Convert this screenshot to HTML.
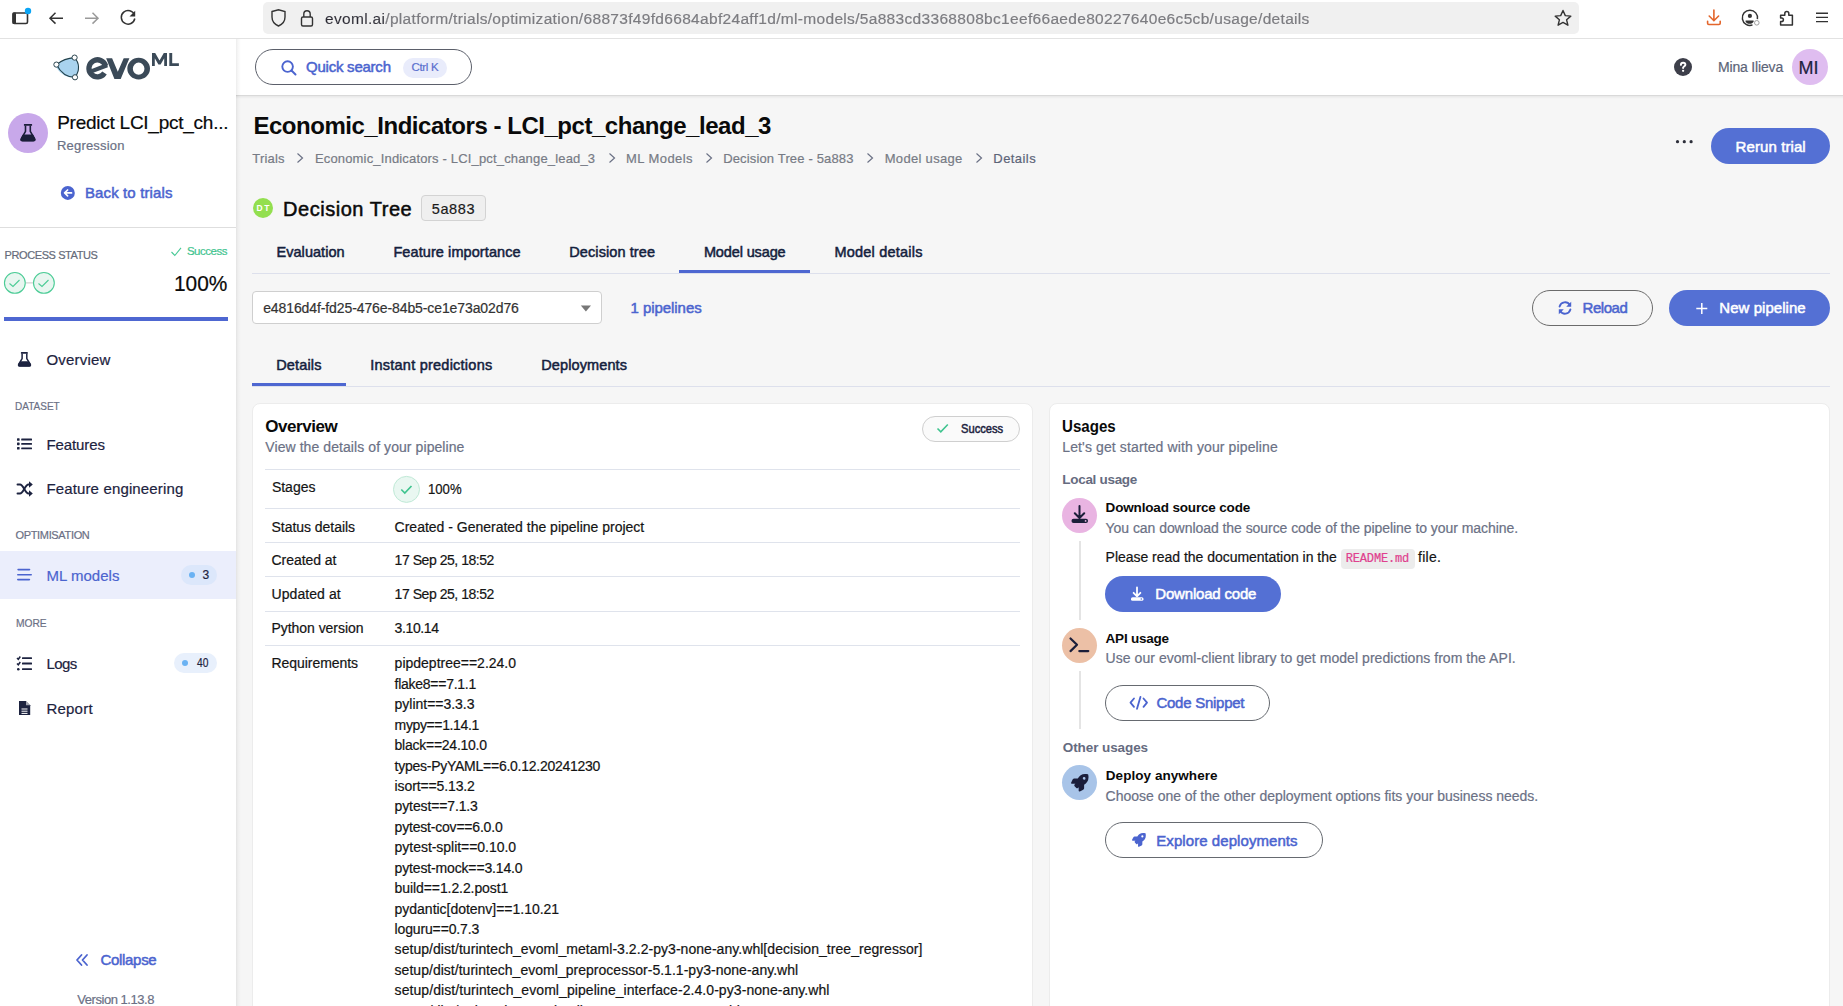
<!DOCTYPE html>
<html><head><meta charset="utf-8">
<style>
*{box-sizing:border-box;margin:0;padding:0}
html,body{width:1843px;height:1006px;overflow:hidden;background:#f6f6f6;font-family:"Liberation Sans",sans-serif}
.t{position:absolute;white-space:pre;line-height:1}
.g{will-change:transform}
svg{overflow:visible}
</style></head><body>
<div style="position:absolute;left:0px;top:0px;width:1843px;height:38px;background:#fff"></div>
<div style="position:absolute;left:0px;top:38px;width:1843px;height:1px;background:#e2e2e2"></div>
<div style="position:absolute;left:263px;top:2px;width:1316px;height:32px;background:#f0f0f0;border-radius:5px"></div>
<svg style="position:absolute;left:0;top:0" width="160" height="38">
    <rect x="13" y="13" width="14.5" height="10.5" rx="1.5" fill="none" stroke="#333" stroke-width="1.6"/>
    <rect x="12.5" y="12.5" width="3.5" height="11.5" rx="1" fill="#333"/>
    <circle cx="28" cy="11" r="3.2" fill="#0aa5f5"/>
    <path d="M63 18.2H50 M55.5 12.8 50 18.2 55.5 23.6" fill="none" stroke="#333" stroke-width="1.5"/>
    <path d="M85 18.2H98 M92.5 12.8 98 18.2 92.5 23.6" fill="none" stroke="#9a9a9a" stroke-width="1.5"/>
    <path d="M134.5 15 A6.8 6.8 0 1 0 134.8 18.5" fill="none" stroke="#333" stroke-width="1.5"/>
    <path d="M135.2 10.8 V16.5 H129.5 Z" fill="#333"/>
</svg>
<svg style="position:absolute;left:263px;top:0" width="60" height="38">
    <path d="M9 11.5 L15.5 9.8 22 11.5 V17 C22 21.5 19 24.5 15.5 26 C12 24.5 9 21.5 9 17 Z" fill="none" stroke="#333" stroke-width="1.4"/>
    <rect x="38.5" y="17" width="11" height="9" rx="1.5" fill="none" stroke="#333" stroke-width="1.4"/>
    <path d="M40.8 17 V14 A3.2 3.2 0 0 1 47.2 14 V17" fill="none" stroke="#333" stroke-width="1.4"/>
</svg>
<svg style="position:absolute;left:1540px;top:0" width="303" height="38">
    <path d="M23 10.5 L25.3 15.6 30.8 16.1 26.6 19.8 27.9 25.2 23 22.4 18.1 25.2 19.4 19.8 15.2 16.1 20.7 15.6 Z" fill="none" stroke="#333" stroke-width="1.4" stroke-linejoin="round"/>
    <path d="M173.9 10 V20.5 M169.2 16 173.9 20.7 178.6 16 M167.6 21.3 V23.3 Q167.6 24.5 168.8 24.5 H179 Q180.2 24.5 180.2 23.3 V21.3" fill="none" stroke="#e3652b" stroke-width="1.6" stroke-linecap="round"/>
    <path d="M212.5 24.9 A7.6 7.6 0 1 1 217.4 19.1" fill="none" stroke="#333" stroke-width="1.5"/>
    <circle cx="209.9" cy="15.9" r="2.1" fill="#333"/>
    <path d="M205.6 20.4 H213.6 V21.5 C213 23.3 211.5 23.8 209.6 23.8 C207.7 23.8 206.2 23.3 205.6 21.5Z" fill="#333"/>
    <circle cx="216.8" cy="22.8" r="2.3" fill="#fff" stroke="#a0a0a0" stroke-width="1"/>
    <path d="M240.6 15.2 H244.8 V13.4 A2 2 0 0 1 248.8 13.4 V15.2 H252.4 V25.1 H240.6 V21.6 H241.6 A1.8 1.8 0 0 0 241.6 18 H240.6 Z" fill="none" stroke="#333" stroke-width="1.5" stroke-linejoin="round"/>
    <path d="M276 13.3 H288 M276 17.4 H288 M276 21.6 H288" stroke="#333" stroke-width="1.4"/>
</svg>
<div style="position:absolute;left:0px;top:39px;width:1843px;height:967px;background:#f6f6f6"></div>
<div style="position:absolute;left:0px;top:39px;width:236px;height:967px;background:#fff"></div>
<div style="position:absolute;left:236px;top:39px;width:1607px;height:56px;background:#fff"></div>
<div style="position:absolute;left:236px;top:95px;width:1607px;height:1px;background:#d9d9d9"></div>
<div style="position:absolute;left:236px;top:96px;width:1607px;height:3px;background:linear-gradient(180deg,rgba(0,0,0,.06),rgba(0,0,0,0))"></div>
<div style="position:absolute;left:236px;top:39px;width:5px;height:967px;background:linear-gradient(90deg,rgba(0,0,0,.075),rgba(0,0,0,.03) 40%,rgba(0,0,0,0))"></div>
<svg style="position:absolute;left:0;top:39px" width="236" height="56" viewBox="0 39 236 56">
  <path d="M55.5 66 C60 61 67 58 74.6 57.6 C79.5 63 80.5 71 75 77.3 C66 78.5 59.5 73 55.5 66Z" fill="#a9d3ee"/>
  <path d="M56.4 64.6 C62 60 67.5 58 74.6 57.6 C79.5 63 80 70.5 75 77.3 C66.5 77.5 60 71.5 56.4 64.6Z" fill="none" stroke="#21404a" stroke-width="1.1"/>
  <circle cx="56.4" cy="64.6" r="2.6" fill="#fff" stroke="#2c4650" stroke-width="1.0"/>
  <circle cx="74.6" cy="57.6" r="2.6" fill="#fff" stroke="#2c4650" stroke-width="1.0"/>
  <circle cx="75" cy="77.3" r="2.6" fill="#fff" stroke="#2c4650" stroke-width="1.0"/>
  <path d="M104.56 72.95 A8.5 8.5 0 1 1 105.6 66" fill="none" stroke="#3b4a58" stroke-width="5.3"/>
  <path d="M107.2 65.2 L90.5 71.6" fill="none" stroke="#3b4a58" stroke-width="4.2"/>
  <path d="M106.15 58.25 H112.1 L117.8 71.7 L123.7 58.25 H129.4 L120.7 79 H114.4 Z" fill="#3b4a58"/>
  <path d="M138.65 57.8 A11.35 10.8 0 1 1 138.65 79.4 A11.35 10.8 0 1 1 138.65 57.8 Z M138.65 62.6 A5.8 6.1 0 1 0 138.65 74.8 A5.8 6.1 0 1 0 138.65 62.6 Z" fill="#3b4a58" fill-rule="evenodd"/>
  <path d="M152 66 V53.1 H155.2 L159.5 60.5 L163.8 53.1 H167 V66 H164.2 V58.2 L160.6 64.5 H158.4 L154.8 58.2 V66 Z M169.3 53.1 H172.2 V63.3 H178.9 V66 H169.3 Z" fill="#3b4a58"/>
</svg>
<div style="position:absolute;left:8px;top:113px;width:40px;height:40px;background:#c8a8ea;border-radius:50%"></div>
<svg style="position:absolute;left:8px;top:113px" width="40" height="40">
  <rect x="15.9" y="11.1" width="8.2" height="1.7" rx=".5" fill="#1b1e3a"/>
  <path d="M17.5 12.5 V18.3 L13.4 25.6 C12.6 27.1 13.3 27.6 14.6 27.6 H25.3 C26.6 27.6 27.3 27.1 26.5 25.6 L22.3 18.3 V12.5" fill="none" stroke="#1b1e3a" stroke-width="1.6" stroke-linejoin="round"/>
  <path d="M15.2 22 H24.7 L26.5 25.6 C27.3 27.1 26.6 27.6 25.3 27.6 H14.6 C13.3 27.6 12.6 27.1 13.4 25.6 Z" fill="#1b1e3a" stroke="#1b1e3a" stroke-width="1.2" stroke-linejoin="round"/>
</svg>
<svg style="position:absolute;left:60px;top:185px" width="16" height="16">
  <circle cx="7.8" cy="7.9" r="7" fill="#4b64cf"/>
  <path d="M11.5 7.9 H4.8 M7.6 5 L4.6 7.9 7.6 10.8" fill="none" stroke="#fff" stroke-width="1.7" stroke-linecap="round" stroke-linejoin="round"/>
</svg>
<div style="position:absolute;left:0px;top:227px;width:236px;height:1px;background:#dedede"></div>
<svg style="position:absolute;left:170px;top:246px" width="14" height="12">
  <path d="M1.5 6 L4.8 9.5 L11 1.8" fill="none" stroke="#48c996" stroke-width="1.1"/>
</svg>
<svg style="position:absolute;left:0;top:268px" width="60" height="30">
  <line x1="25.5" y1="14.9" x2="33" y2="14.9" stroke="#c8c8c8" stroke-width="1"/>
  <circle cx="14.85" cy="14.9" r="10.4" fill="#e8f6f0" stroke="#4ccc96" stroke-width="1.1"/>
  <circle cx="43.9" cy="14.9" r="10.4" fill="#e8f6f0" stroke="#4ccc96" stroke-width="1.1"/>
  <path d="M9.5 15.5 L13 18.5 L19.5 12" fill="none" stroke="#4ccc96" stroke-width="1.1"/>
  <path d="M38.5 15.5 L42 18.5 L48.5 12" fill="none" stroke="#4ccc96" stroke-width="1.1"/>
</svg>
<div style="position:absolute;left:4px;top:317px;width:224px;height:4px;background:#4e67d1"></div>
<svg style="position:absolute;left:16px;top:350px" width="18" height="18">
  <rect x="4.9" y="2.1" width="6.9" height="1.6" rx=".5" fill="#1d2340"/>
  <path d="M6.1 3.4 V8.6 L2.8 14.2 C2.1 15.6 2.7 15.9 3.9 15.9 H13.1 C14.3 15.9 14.9 15.6 14.2 14.2 L10.8 8.6 V3.4" fill="none" stroke="#1d2340" stroke-width="1.5" stroke-linejoin="round"/>
  <path d="M4.6 11.9 H12.3 L14.2 14.2 C14.9 15.6 14.3 15.9 13.1 15.9 H3.9 C2.7 15.9 2.1 15.6 2.8 14.2 Z" fill="#1d2340" stroke="#1d2340" stroke-width="1.1" stroke-linejoin="round"/>
</svg>
<svg style="position:absolute;left:16px;top:436.7px" width="18" height="16">
  <g fill="#1d2340"><rect x="1" y="1.2" width="2.6" height="2.6" rx=".6"/><rect x="1" y="5.6" width="2.6" height="2.6" rx=".6"/><rect x="1" y="10" width="2.6" height="2.6" rx=".6"/>
  <rect x="5.2" y="1.6" width="10.8" height="1.8" rx=".5"/><rect x="5.2" y="6" width="10.8" height="1.8" rx=".5"/><rect x="5.2" y="10.4" width="10.8" height="1.8" rx=".5"/></g>
</svg>
<svg style="position:absolute;left:16px;top:480.5px" width="18" height="16">
  <g fill="none" stroke="#1d2340" stroke-width="1.9" stroke-linecap="round">
  <path d="M1.5 3.5 H4 C7.5 3.5 9 12.5 12.5 12.5 H14"/>
  <path d="M1.5 12.5 H4 C7.5 12.5 9 3.5 12.5 3.5 H14"/></g>
  <path d="M13 0.3 L16.8 3.5 L13 6.7Z M13 9.3 L16.8 12.5 L13 15.7Z" fill="#1d2340"/>
</svg>
<div style="position:absolute;left:0px;top:551px;width:236px;height:48px;background:#ebeefc"></div>
<svg style="position:absolute;left:16px;top:566px" width="18" height="16">
  <g fill="#4b64cf"><rect x="1.3" y="2.7" width="13" height="1.7" rx=".8"/><rect x="1" y="7.9" width="15" height="1.7" rx=".8"/><rect x="1" y="12.7" width="13.2" height="1.7" rx=".8"/></g>
</svg>
<div style="position:absolute;left:181px;top:565px;width:36px;height:20px;background:#dce7fb;border-radius:10px"></div>
<div style="position:absolute;left:189px;top:572px;width:6px;height:6px;background:#6ab2f3;border-radius:50%"></div>
<svg style="position:absolute;left:16px;top:654.5px" width="18" height="18">
  <g fill="none" stroke="#1d2340" stroke-width="1.5"><path d="M1 3 L2.3 4.3 L4.3 1.5"/><path d="M1 8.5 L2.3 9.8 L4.3 7"/></g>
  <circle cx="2.3" cy="14.3" r="1.3" fill="#1d2340"/>
  <g fill="#1d2340"><rect x="6" y="2.2" width="10" height="1.8" rx=".5"/><rect x="6" y="7.6" width="10" height="1.8" rx=".5"/><rect x="6" y="13.3" width="10" height="1.8" rx=".5"/></g>
</svg>
<div style="position:absolute;left:174px;top:653px;width:43px;height:20px;background:#e8f0fc;border-radius:10px"></div>
<div style="position:absolute;left:182px;top:660px;width:6px;height:6px;background:#6ab2f3;border-radius:50%"></div>
<svg style="position:absolute;left:16px;top:699px" width="18" height="18">
  <path d="M3 2 H10 L14.2 6.2 V16 H3 Z" fill="#1d2340"/>
  <path d="M10 2 V6.2 H14.2" fill="#fff" opacity=".6"/>
  <g fill="#fff"><rect x="5.5" y="9.5" width="6" height="1"/><rect x="5.5" y="11.7" width="6" height="1"/><rect x="5.5" y="13.9" width="6" height="1"/></g>
</svg>
<svg style="position:absolute;left:74px;top:952px" width="16" height="16">
  <path d="M7.5 3 L3 8 L7.5 13 M13 3 L8.5 8 L13 13" fill="none" stroke="#4b64cf" stroke-width="1.8" stroke-linejoin="round" stroke-linecap="round"/>
</svg>
<div style="position:absolute;left:255px;top:49px;width:217px;height:36px;border:1px solid #5b5f6a;border-radius:18px"></div>
<svg style="position:absolute;left:280px;top:59px" width="18" height="18">
  <circle cx="7.6" cy="7.6" r="5.3" fill="none" stroke="#4b64cf" stroke-width="1.9"/>
  <path d="M11.5 11.5 L15.5 15.5" stroke="#4b64cf" stroke-width="2" stroke-linecap="round"/>
</svg>
<div style="position:absolute;left:403px;top:58px;width:44px;height:20px;background:#e9ecfb;border-radius:10px"></div>
<svg style="position:absolute;left:1673px;top:57px" width="20" height="20">
  <circle cx="10" cy="10" r="9" fill="#3d3f4a"/>
  <path d="M7.9 7.9 C7.9 6.4 8.9 5.7 10.1 5.7 C11.4 5.7 12.4 6.5 12.4 7.7 C12.4 9 10.6 9.3 10.1 10.6 V11" fill="none" stroke="#fff" stroke-width="1.9" stroke-linecap="round"/>
  <circle cx="10.1" cy="13.8" r="1.15" fill="#fff"/>
</svg>
<div style="position:absolute;left:1792px;top:49px;width:36px;height:36px;background:#dfbdf0;border-radius:50%"></div>
<svg style="position:absolute;left:296.4px;top:152px" width="9" height="12"><path d="M1.5 1.5 L6.5 6 L1.5 10.5" fill="none" stroke="#6b7185" stroke-width="1.2"/></svg>
<svg style="position:absolute;left:607.6px;top:152px" width="9" height="12"><path d="M1.5 1.5 L6.5 6 L1.5 10.5" fill="none" stroke="#6b7185" stroke-width="1.2"/></svg>
<svg style="position:absolute;left:704.8px;top:152px" width="9" height="12"><path d="M1.5 1.5 L6.5 6 L1.5 10.5" fill="none" stroke="#6b7185" stroke-width="1.2"/></svg>
<svg style="position:absolute;left:866.2px;top:152px" width="9" height="12"><path d="M1.5 1.5 L6.5 6 L1.5 10.5" fill="none" stroke="#6b7185" stroke-width="1.2"/></svg>
<svg style="position:absolute;left:974.8px;top:152px" width="9" height="12"><path d="M1.5 1.5 L6.5 6 L1.5 10.5" fill="none" stroke="#6b7185" stroke-width="1.2"/></svg>
<svg style="position:absolute;left:1674px;top:138px" width="22" height="8">
  <circle cx="3.5" cy="3.7" r="1.6" fill="#2d2f3a"/><circle cx="10.3" cy="3.7" r="1.6" fill="#2d2f3a"/><circle cx="17.1" cy="3.7" r="1.6" fill="#2d2f3a"/>
</svg>
<div style="position:absolute;left:1711px;top:128px;width:119px;height:36px;background:#5470d4;border-radius:18px"></div>
<div style="position:absolute;left:253px;top:198px;width:20px;height:20px;background:#93df4f;border-radius:50%"></div>
<div style="position:absolute;left:421px;top:195px;width:65px;height:26px;background:#efefef;border:1px solid #d3d3d3;border-radius:4px"></div>
<div style="position:absolute;left:252px;top:273px;width:1578px;height:1px;background:#dde0ec"></div>
<div style="position:absolute;left:679px;top:270px;width:131px;height:3px;background:#4e67d1"></div>
<div style="position:absolute;left:252px;top:291px;width:350px;height:33px;background:#fff;border:1px solid #cfcfcf;border-radius:4px"></div>
<svg style="position:absolute;left:580px;top:304px" width="12" height="9"><path d="M0.8 1.5 H11 L5.9 7.5Z" fill="#777"/></svg>
<div style="position:absolute;left:1532px;top:290px;width:121px;height:36px;border:1px solid #6b6b6b;border-radius:18px"></div>
<svg style="position:absolute;left:1557px;top:300px" width="16" height="16">
  <g fill="none" stroke="#4b64cf" stroke-width="1.9" stroke-linecap="round">
  <path d="M2.6 6.5 A5.6 5.6 0 0 1 12.8 5"/><path d="M13.4 9.5 A5.6 5.6 0 0 1 3.2 11"/></g>
  <path d="M14.2 1.8 V6.8 H9.2Z M1.8 14.2 V9.2 H6.8Z" fill="#4b64cf"/>
</svg>
<div style="position:absolute;left:1669px;top:290px;width:161px;height:36px;background:#5470d4;border-radius:18px"></div>
<svg style="position:absolute;left:1694px;top:301px" width="16" height="16">
  <path d="M7.8 2 V13 M2.3 7.5 H13.3" stroke="#fff" stroke-width="1.5"/>
</svg>
<div style="position:absolute;left:252px;top:386px;width:1578px;height:1px;background:#dde0ec"></div>
<div style="position:absolute;left:252px;top:383px;width:94px;height:3px;background:#4e67d1"></div>
<div style="position:absolute;left:252px;top:403px;width:781px;height:611px;background:#fff;border-radius:8px;border:1px solid #ececec"></div>
<div style="position:absolute;left:922px;top:416px;width:98px;height:26px;background:#fafafa;border:1px solid #cfcfcf;border-radius:13px"></div>
<svg style="position:absolute;left:935px;top:421px" width="16" height="14"><path d="M2.5 7.5 L5.8 10.8 L12.8 3.5" fill="none" stroke="#3fc48f" stroke-width="1.6"/></svg>
<div style="position:absolute;left:265px;top:469px;width:755px;height:1px;background:#dfe3ec"></div>
<div style="position:absolute;left:265px;top:508px;width:755px;height:1px;background:#dfe3ec"></div>
<div style="position:absolute;left:265px;top:542px;width:755px;height:1px;background:#dfe3ec"></div>
<div style="position:absolute;left:265px;top:576px;width:755px;height:1px;background:#dfe3ec"></div>
<div style="position:absolute;left:265px;top:611px;width:755px;height:1px;background:#dfe3ec"></div>
<div style="position:absolute;left:265px;top:645px;width:755px;height:1px;background:#dfe3ec"></div>
<svg style="position:absolute;left:392px;top:475px" width="30" height="30">
  <circle cx="14.5" cy="14.4" r="13" fill="#e9f7f1" stroke="#bfe9d6" stroke-width="1"/>
  <path d="M9.3 14.5 L12.8 18 L19.5 11" fill="none" stroke="#3fc48f" stroke-width="1.7"/>
</svg>
<div style="position:absolute;left:1049px;top:403px;width:781px;height:611px;background:#fff;border-radius:8px;border:1px solid #ececec"></div>
<div style="position:absolute;left:1062px;top:498px;width:35px;height:35px;background:#e9b4e2;border-radius:50%"></div>
<svg style="position:absolute;left:1062px;top:498px" width="35" height="35">
  <path d="M17.5 8 V19.5 M12.8 15.2 L17.5 20 L22.2 15.2" fill="none" stroke="#1b1e3a" stroke-width="2" stroke-linecap="round" stroke-linejoin="round"/>
  <rect x="9.5" y="20.8" width="16.5" height="4.2" rx="2" fill="#1b1e3a"/>
  <circle cx="23.6" cy="22.9" r=".9" fill="#e9b4e2"/>
</svg>
<div style="position:absolute;left:1079px;top:541px;width:2px;height:79px;background:#e4e4e4"></div>
<div style="position:absolute;left:1341px;top:549px;width:74px;height:20px;background:#ececec;border-radius:4px"></div>
<div style="position:absolute;left:1105px;top:576px;width:176px;height:36px;background:#5470d4;border-radius:18px"></div>
<svg style="position:absolute;left:1129px;top:586px" width="18" height="17">
  <path d="M8 1.5 V10 M4.6 6.8 L8 10.3 L11.4 6.8" fill="none" stroke="#fff" stroke-width="1.8" stroke-linecap="round" stroke-linejoin="round"/>
  <rect x="2" y="11.2" width="12.5" height="3.6" rx="1.6" fill="#fff"/>
  <circle cx="12.3" cy="13" r=".8" fill="#5470d4"/>
</svg>
<div style="position:absolute;left:1062px;top:628px;width:35px;height:35px;background:#ecc0a6;border-radius:50%"></div>
<svg style="position:absolute;left:1062px;top:628px" width="35" height="35">
  <path d="M8.5 10.5 L15 16.8 L8.5 23.1" fill="none" stroke="#1b1e3a" stroke-width="2.2" stroke-linecap="round" stroke-linejoin="round"/>
  <path d="M17.3 23.1 H26.3" stroke="#1b1e3a" stroke-width="2.2" stroke-linecap="round"/>
</svg>
<div style="position:absolute;left:1079px;top:671px;width:2px;height:58px;background:#e4e4e4"></div>
<div style="position:absolute;left:1105px;top:685px;width:165px;height:36px;border:1px solid #666a70;border-radius:18px"></div>
<svg style="position:absolute;left:1129px;top:695px" width="20" height="16">
  <g fill="none" stroke="#4b64cf" stroke-width="1.8" stroke-linecap="round" stroke-linejoin="round">
  <path d="M5 3.5 L1.5 7.7 L5 11.9"/><path d="M14.5 3.5 L18 7.7 L14.5 11.9"/><path d="M11.5 1.8 L8 13.8"/></g>
</svg>
<div style="position:absolute;left:1062px;top:765px;width:35px;height:35px;background:#a8c4e8;border-radius:50%"></div>
<svg style="position:absolute;left:1071px;top:774px" width="17.5" height="17.5" viewBox="0 0 512 512">
  <path fill="#1b1e3a" d="M505.12 19.09c-1.19-5.53-6.66-11-12.21-12.19C460.72 0 435.51 0 410.41 0 307.18 0 245.27 55.2 199.05 128H94.84c-16.35.02-35.56 11.88-42.89 26.48L2.52 253.3A28.4 28.4 0 0 0 0 264a24 24 0 0 0 24.01 24h103.81l-22.47 22.47c-11.37 11.36-13 32.26 0 45.25l50.9 50.91c11.16 11.19 32.16 13.16 45.28 0l22.47-22.47V488a24 24 0 0 0 24.01 24 28.56 28.56 0 0 0 10.71-2.52l98.73-49.39c14.63-7.3 26.51-26.5 26.51-42.86V312.8c72.6-46.31 128.03-108.41 128.03-211.1.01-25.2.01-50.4-6.95-82.61zM384.04 168a40 40 0 1 1 40.01-40 40.02 40.02 0 0 1-40.01 40z"/>
</svg>
<div style="position:absolute;left:1105px;top:822px;width:218px;height:36px;border:1px solid #666a70;border-radius:18px"></div>
<svg style="position:absolute;left:1132px;top:833.2px" width="13.8" height="13.8" viewBox="0 0 512 512">
  <path fill="#4b64cf" d="M505.12 19.09c-1.19-5.53-6.66-11-12.21-12.19C460.72 0 435.51 0 410.41 0 307.18 0 245.27 55.2 199.05 128H94.84c-16.35.02-35.56 11.88-42.89 26.48L2.52 253.3A28.4 28.4 0 0 0 0 264a24 24 0 0 0 24.01 24h103.81l-22.47 22.47c-11.37 11.36-13 32.26 0 45.25l50.9 50.91c11.16 11.19 32.16 13.16 45.28 0l22.47-22.47V488a24 24 0 0 0 24.01 24 28.56 28.56 0 0 0 10.71-2.52l98.73-49.39c14.63-7.3 26.51-26.5 26.51-42.86V312.8c72.6-46.31 128.03-108.41 128.03-211.1.01-25.2.01-50.4-6.95-82.61zM384.04 168a40 40 0 1 1 40.01-40 40.02 40.02 0 0 1-40.01 40z"/>
</svg>
<div class="t g" style="left:325.4px;top:11.43px;font-size:15.5px;color:#7c7c80;-webkit-text-stroke:0.2px #7c7c80;letter-spacing:0.319px;"><span style="color:#2b2a33">evoml.ai</span>/platform/trials/optimization/68873f49fd6684abf24aff1d/ml-models/5a883cd3368808bc1eef66aede80227640e6c5cb/usage/details</div>
<div class="t" style="left:57.2px;top:112.75px;font-size:19px;color:#0a0a0a;-webkit-text-stroke:0.2px #0a0a0a;letter-spacing:-0.254px;">Predict LCI_pct_ch...</div>
<div class="t" style="left:57.0px;top:138.95px;font-size:13px;color:#6b7185;-webkit-text-stroke:0.2px #6b7185;letter-spacing:0.182px;">Regression</div>
<div class="t" style="left:84.9px;top:185.45px;font-size:15px;color:#4b64cf;-webkit-text-stroke:0.5px #4b64cf;letter-spacing:0.133px;">Back to trials</div>
<div class="t" style="left:4.6px;top:249.65px;font-size:11px;color:#656b7a;-webkit-text-stroke:0.2px #656b7a;letter-spacing:-0.408px;">PROCESS STATUS</div>
<div class="t" style="left:186.9px;top:246.22px;font-size:11.5px;color:#3fc48f;-webkit-text-stroke:0.2px #3fc48f;letter-spacing:-0.461px;">Success</div>
<div class="t" style="left:173.8px;top:273.10px;font-size:22px;color:#0a0a0a;-webkit-text-stroke:0.2px #0a0a0a;transform:scaleX(0.9488);transform-origin:0 0;">100%</div>
<div class="t" style="left:46.4px;top:352.25px;font-size:15px;color:#1d2340;-webkit-text-stroke:0.2px #1d2340;letter-spacing:0.212px;">Overview</div>
<div class="t" style="left:15.4px;top:400.65px;font-size:11px;color:#6b7085;-webkit-text-stroke:0.2px #6b7085;transform:scaleX(0.9102);transform-origin:0 0;">DATASET</div>
<div class="t" style="left:46.4px;top:436.95px;font-size:15px;color:#1d2340;-webkit-text-stroke:0.2px #1d2340;letter-spacing:-0.086px;">Features</div>
<div class="t" style="left:46.4px;top:481.25px;font-size:15px;color:#1d2340;-webkit-text-stroke:0.2px #1d2340;letter-spacing:0.146px;">Feature engineering</div>
<div class="t" style="left:15.5px;top:529.95px;font-size:11px;color:#6b7085;-webkit-text-stroke:0.2px #6b7085;letter-spacing:-0.339px;">OPTIMISATION</div>
<div class="t" style="left:46.5px;top:568.05px;font-size:15px;color:#4b64cf;-webkit-text-stroke:0.2px #4b64cf;letter-spacing:0.011px;">ML models</div>
<div class="t" style="left:202.5px;top:568.90px;font-size:12px;color:#1d2340;-webkit-text-stroke:0.2px #1d2340;">3</div>
<div class="t" style="left:15.5px;top:617.95px;font-size:11px;color:#6b7085;-webkit-text-stroke:0.2px #6b7085;transform:scaleX(0.9303);transform-origin:0 0;">MORE</div>
<div class="t" style="left:46.4px;top:655.75px;font-size:15px;color:#1d2340;-webkit-text-stroke:0.2px #1d2340;letter-spacing:-0.544px;">Logs</div>
<div class="t" style="left:196.8px;top:656.90px;font-size:12px;color:#1d2340;-webkit-text-stroke:0.2px #1d2340;transform:scaleX(0.8533);transform-origin:0 0;">40</div>
<div class="t" style="left:46.4px;top:701.25px;font-size:15px;color:#1d2340;-webkit-text-stroke:0.2px #1d2340;letter-spacing:0.234px;">Report</div>
<div class="t" style="left:100.4px;top:952.35px;font-size:15px;color:#4b64cf;-webkit-text-stroke:0.5px #4b64cf;letter-spacing:-0.296px;">Collapse</div>
<div class="t" style="left:77.3px;top:993.25px;font-size:13px;color:#6b7085;-webkit-text-stroke:0.2px #6b7085;letter-spacing:-0.463px;">Version 1.13.8</div>
<div class="t" style="left:306.0px;top:58.65px;font-size:15px;color:#4b64cf;-webkit-text-stroke:0.5px #4b64cf;letter-spacing:-0.232px;">Quick search</div>
<div class="t" style="left:411.5px;top:62.23px;font-size:11.5px;color:#5a6fce;-webkit-text-stroke:0.2px #5a6fce;letter-spacing:-0.330px;">Ctrl K</div>
<div class="t" style="left:1718.0px;top:60.10px;font-size:14px;color:#5c6478;-webkit-text-stroke:0.2px #5c6478;letter-spacing:-0.172px;">Mina Ilieva</div>
<div class="t" style="left:1798.5px;top:59.20px;font-size:18px;color:#1d2340;-webkit-text-stroke:0.2px #1d2340;">MI</div>
<div class="t" style="left:253.4px;top:113.50px;font-size:24px;color:#0a0a0a;font-weight:700;letter-spacing:-0.465px;">Economic_Indicators - LCI_pct_change_lead_3</div>
<div class="t" style="left:252.3px;top:151.95px;font-size:13px;color:#777b85;-webkit-text-stroke:0.2px #777b85;letter-spacing:0.181px;">Trials</div>
<div class="t" style="left:314.9px;top:151.95px;font-size:13px;color:#777b85;-webkit-text-stroke:0.2px #777b85;letter-spacing:0.167px;">Economic_Indicators - LCI_pct_change_lead_3</div>
<div class="t" style="left:626.1px;top:151.95px;font-size:13px;color:#777b85;-webkit-text-stroke:0.2px #777b85;letter-spacing:0.411px;">ML Models</div>
<div class="t" style="left:723.2px;top:151.95px;font-size:13px;color:#777b85;-webkit-text-stroke:0.2px #777b85;letter-spacing:0.151px;">Decision Tree - 5a883</div>
<div class="t" style="left:884.7px;top:151.95px;font-size:13px;color:#777b85;-webkit-text-stroke:0.2px #777b85;letter-spacing:0.315px;">Model usage</div>
<div class="t" style="left:993.3px;top:151.95px;font-size:13px;color:#5c6478;-webkit-text-stroke:0.2px #5c6478;letter-spacing:0.442px;">Details</div>
<div class="t" style="left:1735.6px;top:138.95px;font-size:15px;color:#ffffff;-webkit-text-stroke:0.5px #ffffff;letter-spacing:0.090px;">Rerun trial</div>
<div class="t" style="left:256.5px;top:204.08px;font-size:8.5px;color:#ffffff;font-weight:700;letter-spacing:1.656px;">DT</div>
<div class="t" style="left:283.0px;top:198.80px;font-size:20px;color:#0a0a0a;-webkit-text-stroke:0.5px #0a0a0a;letter-spacing:0.535px;">Decision Tree</div>
<div class="t" style="left:431.8px;top:201.68px;font-size:14.5px;color:#1a1a1a;-webkit-text-stroke:0.2px #1a1a1a;letter-spacing:0.593px;">5a883</div>
<div class="t" style="left:276.5px;top:244.68px;font-size:14.5px;color:#14213d;-webkit-text-stroke:0.5px #14213d;letter-spacing:0.042px;">Evaluation</div>
<div class="t" style="left:393.4px;top:244.68px;font-size:14.5px;color:#14213d;-webkit-text-stroke:0.5px #14213d;letter-spacing:0.086px;">Feature importance</div>
<div class="t" style="left:569.3px;top:244.68px;font-size:14.5px;color:#14213d;-webkit-text-stroke:0.5px #14213d;letter-spacing:0.090px;">Decision tree</div>
<div class="t" style="left:703.9px;top:244.68px;font-size:14.5px;color:#14213d;-webkit-text-stroke:0.5px #14213d;letter-spacing:-0.123px;">Model usage</div>
<div class="t" style="left:834.5px;top:244.68px;font-size:14.5px;color:#14213d;-webkit-text-stroke:0.5px #14213d;letter-spacing:0.205px;">Model details</div>
<div class="t" style="left:263.2px;top:301.20px;font-size:14px;color:#333333;-webkit-text-stroke:0.2px #333333;letter-spacing:-0.101px;">e4816d4f-fd25-476e-84b5-ce1e73a02d76</div>
<div class="t" style="left:630.5px;top:300.15px;font-size:15px;color:#4b64cf;-webkit-text-stroke:0.5px #4b64cf;letter-spacing:-0.052px;">1 pipelines</div>
<div class="t" style="left:1582.6px;top:300.25px;font-size:15px;color:#4b64cf;-webkit-text-stroke:0.5px #4b64cf;letter-spacing:-0.469px;">Reload</div>
<div class="t" style="left:1719.3px;top:300.25px;font-size:15px;color:#ffffff;-webkit-text-stroke:0.5px #ffffff;letter-spacing:0.046px;">New pipeline</div>
<div class="t" style="left:276.2px;top:357.68px;font-size:14.5px;color:#14213d;-webkit-text-stroke:0.5px #14213d;letter-spacing:0.145px;">Details</div>
<div class="t" style="left:370.2px;top:357.68px;font-size:14.5px;color:#14213d;-webkit-text-stroke:0.5px #14213d;letter-spacing:0.240px;">Instant predictions</div>
<div class="t" style="left:541.2px;top:357.68px;font-size:14.5px;color:#14213d;-webkit-text-stroke:0.5px #14213d;letter-spacing:0.117px;">Deployments</div>
<div class="t" style="left:265.3px;top:417.65px;font-size:17px;color:#0a0a0a;font-weight:700;letter-spacing:-0.444px;">Overview</div>
<div class="t" style="left:265.3px;top:440.10px;font-size:14px;color:#6b7185;-webkit-text-stroke:0.2px #6b7185;letter-spacing:0.076px;">View the details of your pipeline</div>
<div class="t" style="left:961.4px;top:421.95px;font-size:13px;color:#1d2340;-webkit-text-stroke:0.5px #1d2340;transform:scaleX(0.8588);transform-origin:0 0;">Success</div>
<div class="t" style="left:271.9px;top:480.40px;font-size:14px;color:#141414;-webkit-text-stroke:0.2px #141414;">Stages</div>
<div class="t" style="left:428.1px;top:481.90px;font-size:14px;color:#141414;-webkit-text-stroke:0.2px #141414;transform:scaleX(0.9382);transform-origin:0 0;">100%</div>
<div class="t" style="left:271.5px;top:519.60px;font-size:14px;color:#141414;-webkit-text-stroke:0.2px #141414;letter-spacing:-0.036px;">Status details</div>
<div class="t" style="left:394.6px;top:519.60px;font-size:14px;color:#141414;-webkit-text-stroke:0.2px #141414;letter-spacing:-0.006px;">Created - Generated the pipeline project</div>
<div class="t" style="left:271.5px;top:553.20px;font-size:14px;color:#141414;-webkit-text-stroke:0.2px #141414;letter-spacing:-0.053px;">Created at</div>
<div class="t" style="left:394.6px;top:553.20px;font-size:14px;color:#141414;-webkit-text-stroke:0.2px #141414;letter-spacing:-0.457px;">17 Sep 25, 18:52</div>
<div class="t" style="left:271.5px;top:587.30px;font-size:14px;color:#141414;-webkit-text-stroke:0.2px #141414;letter-spacing:0.078px;">Updated at</div>
<div class="t" style="left:394.6px;top:587.30px;font-size:14px;color:#141414;-webkit-text-stroke:0.2px #141414;letter-spacing:-0.457px;">17 Sep 25, 18:52</div>
<div class="t" style="left:271.5px;top:620.90px;font-size:14px;color:#141414;-webkit-text-stroke:0.2px #141414;letter-spacing:-0.047px;">Python version</div>
<div class="t" style="left:394.6px;top:620.90px;font-size:14px;color:#141414;-webkit-text-stroke:0.2px #141414;letter-spacing:-0.386px;">3.10.14</div>
<div class="t" style="left:271.5px;top:656.30px;font-size:14px;color:#141414;-webkit-text-stroke:0.2px #141414;letter-spacing:-0.051px;">Requirements</div>
<div class="t" style="left:394.6px;top:656.30px;font-size:14px;color:#141414;-webkit-text-stroke:0.2px #141414;">pipdeptree==2.24.0</div>
<div class="t" style="left:394.6px;top:676.74px;font-size:14px;color:#141414;-webkit-text-stroke:0.2px #141414;letter-spacing:-0.272px;">flake8==7.1.1</div>
<div class="t" style="left:394.6px;top:697.18px;font-size:14px;color:#141414;-webkit-text-stroke:0.2px #141414;letter-spacing:-0.023px;">pylint==3.3.3</div>
<div class="t" style="left:394.6px;top:717.62px;font-size:14px;color:#141414;-webkit-text-stroke:0.2px #141414;letter-spacing:-0.376px;">mypy==1.14.1</div>
<div class="t" style="left:394.6px;top:738.06px;font-size:14px;color:#141414;-webkit-text-stroke:0.2px #141414;letter-spacing:-0.258px;">black==24.10.0</div>
<div class="t" style="left:394.6px;top:758.50px;font-size:14px;color:#141414;-webkit-text-stroke:0.2px #141414;letter-spacing:-0.258px;">types-PyYAML==6.0.12.20241230</div>
<div class="t" style="left:394.6px;top:778.94px;font-size:14px;color:#141414;-webkit-text-stroke:0.2px #141414;letter-spacing:-0.120px;">isort==5.13.2</div>
<div class="t" style="left:394.6px;top:799.38px;font-size:14px;color:#141414;-webkit-text-stroke:0.2px #141414;letter-spacing:-0.129px;">pytest==7.1.3</div>
<div class="t" style="left:394.6px;top:819.82px;font-size:14px;color:#141414;-webkit-text-stroke:0.2px #141414;letter-spacing:-0.200px;">pytest-cov==6.0.0</div>
<div class="t" style="left:394.6px;top:840.26px;font-size:14px;color:#141414;-webkit-text-stroke:0.2px #141414;letter-spacing:-0.036px;">pytest-split==0.10.0</div>
<div class="t" style="left:394.6px;top:860.70px;font-size:14px;color:#141414;-webkit-text-stroke:0.2px #141414;letter-spacing:-0.153px;">pytest-mock==3.14.0</div>
<div class="t" style="left:394.6px;top:881.14px;font-size:14px;color:#141414;-webkit-text-stroke:0.2px #141414;letter-spacing:-0.089px;">build==1.2.2.post1</div>
<div class="t" style="left:394.6px;top:901.58px;font-size:14px;color:#141414;-webkit-text-stroke:0.2px #141414;letter-spacing:-0.022px;">pydantic[dotenv]==1.10.21</div>
<div class="t" style="left:394.6px;top:922.02px;font-size:14px;color:#141414;-webkit-text-stroke:0.2px #141414;letter-spacing:-0.151px;">loguru==0.7.3</div>
<div class="t" style="left:394.6px;top:942.46px;font-size:14px;color:#141414;-webkit-text-stroke:0.2px #141414;letter-spacing:0.045px;">setup/dist/turintech_evoml_metaml-3.2.2-py3-none-any.whl[decision_tree_regressor]</div>
<div class="t" style="left:394.6px;top:962.90px;font-size:14px;color:#141414;-webkit-text-stroke:0.2px #141414;letter-spacing:0.025px;">setup/dist/turintech_evoml_preprocessor-5.1.1-py3-none-any.whl</div>
<div class="t" style="left:394.6px;top:983.34px;font-size:14px;color:#141414;-webkit-text-stroke:0.2px #141414;letter-spacing:0.070px;">setup/dist/turintech_evoml_pipeline_interface-2.4.0-py3-none-any.whl</div>
<div class="t" style="left:394.6px;top:1003.78px;font-size:14px;color:#141414;-webkit-text-stroke:0.2px #141414;">setup/dist/turintech_evoml_utils-0.4.2-py3-none-any.whl</div>
<div class="t" style="left:1062.3px;top:417.55px;font-size:17px;color:#0a0a0a;font-weight:700;transform:scaleX(0.8878);transform-origin:0 0;">Usages</div>
<div class="t" style="left:1062.3px;top:440.10px;font-size:14px;color:#6b7185;-webkit-text-stroke:0.2px #6b7185;letter-spacing:0.119px;">Let&#x27;s get started with your pipeline</div>
<div class="t" style="left:1062.3px;top:472.72px;font-size:13.5px;color:#656b80;font-weight:700;letter-spacing:-0.303px;">Local usage</div>
<div class="t" style="left:1105.6px;top:501.32px;font-size:13.5px;color:#0a0a0a;font-weight:700;letter-spacing:-0.162px;">Download source code</div>
<div class="t" style="left:1105.6px;top:521.10px;font-size:14px;color:#6b7185;-webkit-text-stroke:0.2px #6b7185;letter-spacing:-0.053px;">You can download the source code of the pipeline to your machine.</div>
<div class="t" style="left:1105.6px;top:549.90px;font-size:14px;color:#141414;-webkit-text-stroke:0.2px #141414;letter-spacing:-0.024px;">Please read the documentation in the</div>
<div class="t" style="left:1345.8px;top:553.18px;font-size:12px;color:#e0408e;-webkit-text-stroke:0.2px #e0408e;letter-spacing:-0.177px;font-family:'Liberation Mono',monospace;">README.md</div>
<div class="t" style="left:1418.1px;top:549.90px;font-size:14px;color:#141414;-webkit-text-stroke:0.2px #141414;letter-spacing:0.251px;">file.</div>
<div class="t" style="left:1155.3px;top:586.45px;font-size:15px;color:#ffffff;-webkit-text-stroke:0.5px #ffffff;letter-spacing:-0.192px;">Download code</div>
<div class="t" style="left:1105.6px;top:632.02px;font-size:13.5px;color:#0a0a0a;font-weight:700;letter-spacing:-0.235px;">API usage</div>
<div class="t" style="left:1105.6px;top:651.10px;font-size:14px;color:#6b7185;-webkit-text-stroke:0.2px #6b7185;letter-spacing:0.048px;">Use our evoml-client library to get model predictions from the API.</div>
<div class="t" style="left:1156.4px;top:695.15px;font-size:15px;color:#4b64cf;-webkit-text-stroke:0.5px #4b64cf;letter-spacing:-0.255px;">Code Snippet</div>
<div class="t" style="left:1062.8px;top:741.02px;font-size:13.5px;color:#656b80;font-weight:700;letter-spacing:-0.089px;">Other usages</div>
<div class="t" style="left:1105.8px;top:769.02px;font-size:13.5px;color:#0a0a0a;font-weight:700;letter-spacing:0.047px;">Deploy anywhere</div>
<div class="t" style="left:1105.6px;top:789.00px;font-size:14px;color:#6b7185;-webkit-text-stroke:0.2px #6b7185;letter-spacing:-0.013px;">Choose one of the other deployment options fits your business needs.</div>
<div class="t" style="left:1156.3px;top:833.45px;font-size:15px;color:#4b64cf;-webkit-text-stroke:0.5px #4b64cf;letter-spacing:0.068px;">Explore deployments</div>
</body></html>
